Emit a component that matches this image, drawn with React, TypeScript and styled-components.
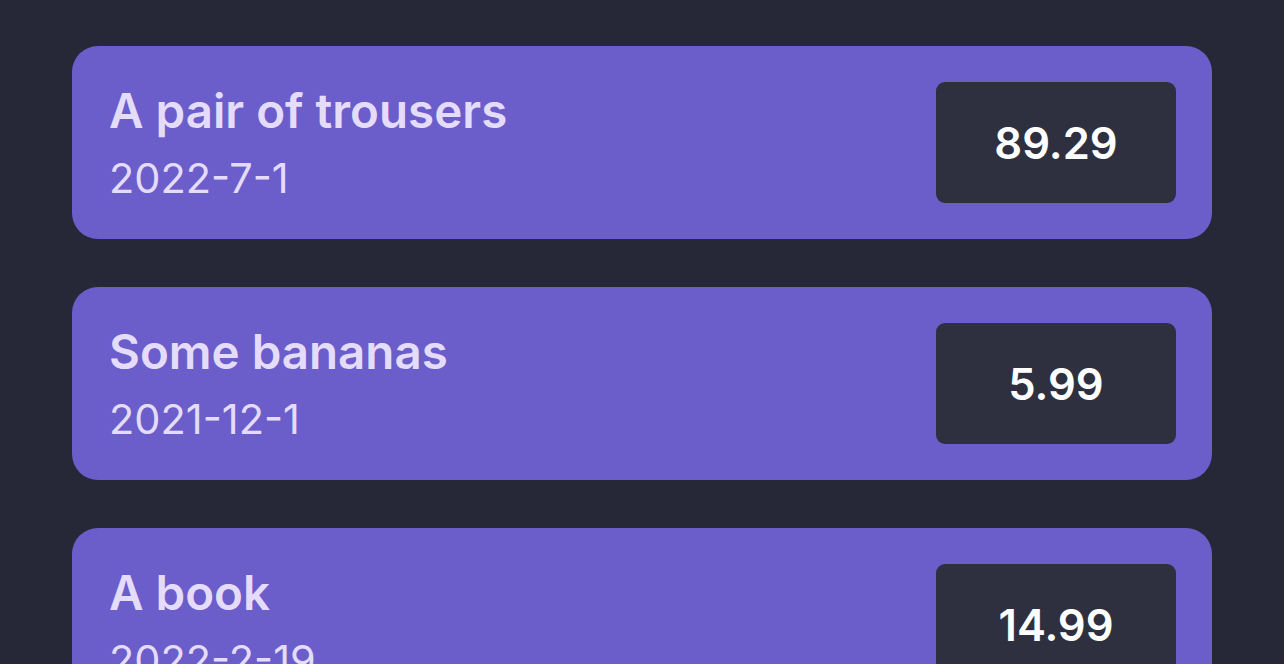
import React from "react";
import styled, { createGlobalStyle } from "styled-components";

const GlobalStyle = createGlobalStyle`
  html, body {
    margin: 0;
    padding: 0;
    background: #262837;
    font-family: Inter, "Noto Sans", sans-serif;
  }
`;

const Page = styled.main`
  min-height: 100vh;
  background: #262837;
  padding: 46px 72px;
  box-sizing: border-box;
`;

const List = styled.ul`
  list-style: none;
  margin: 0 auto;
  padding: 0;
  max-width: 1140px;
  display: flex;
  flex-direction: column;
  gap: 48px;
`;

const Card = styled.li`
  display: flex;
  align-items: center;
  justify-content: space-between;
  background: #6b5ecb;
  border-radius: 26px;
  padding: 36px;
  padding-left: 37px;
`;

const Info = styled.div`
  display: flex;
  flex-direction: column;
  gap: 14px;
`;

const Title = styled.h2`
  margin: 0;
  font-size: 47.5px;
  line-height: 56px;
  font-weight: 600;
  color: #e4dcfa;
`;

const DateText = styled.div`
  font-size: 41.5px;
  line-height: 50px;
  font-weight: 400;
  color: #e4dcfa;
`;

const Price = styled.div`
  width: 240px;
  height: 121px;
  display: flex;
  align-items: center;
  justify-content: center;
  background: #2e3040;
  border-radius: 9px;
  color: #ffffff;
  font-size: 43.5px;
  font-weight: 600;
`;

const items = [
  { title: "A pair of trousers", date: "2022-7-1", price: "89.29" },
  { title: "Some bananas", date: "2021-12-1", price: "5.99" },
  { title: "A book", date: "2022-2-19", price: "14.99" },
];

export default function App() {
  return (
    <>
      <GlobalStyle />
      <Page>
        <List>
          {items.map((it) => (
            <Card key={it.title}>
              <Info>
                <Title>{it.title}</Title>
                <DateText>{it.date}</DateText>
              </Info>
              <Price>{it.price}</Price>
            </Card>
          ))}
        </List>
      </Page>
    </>
  );
}
